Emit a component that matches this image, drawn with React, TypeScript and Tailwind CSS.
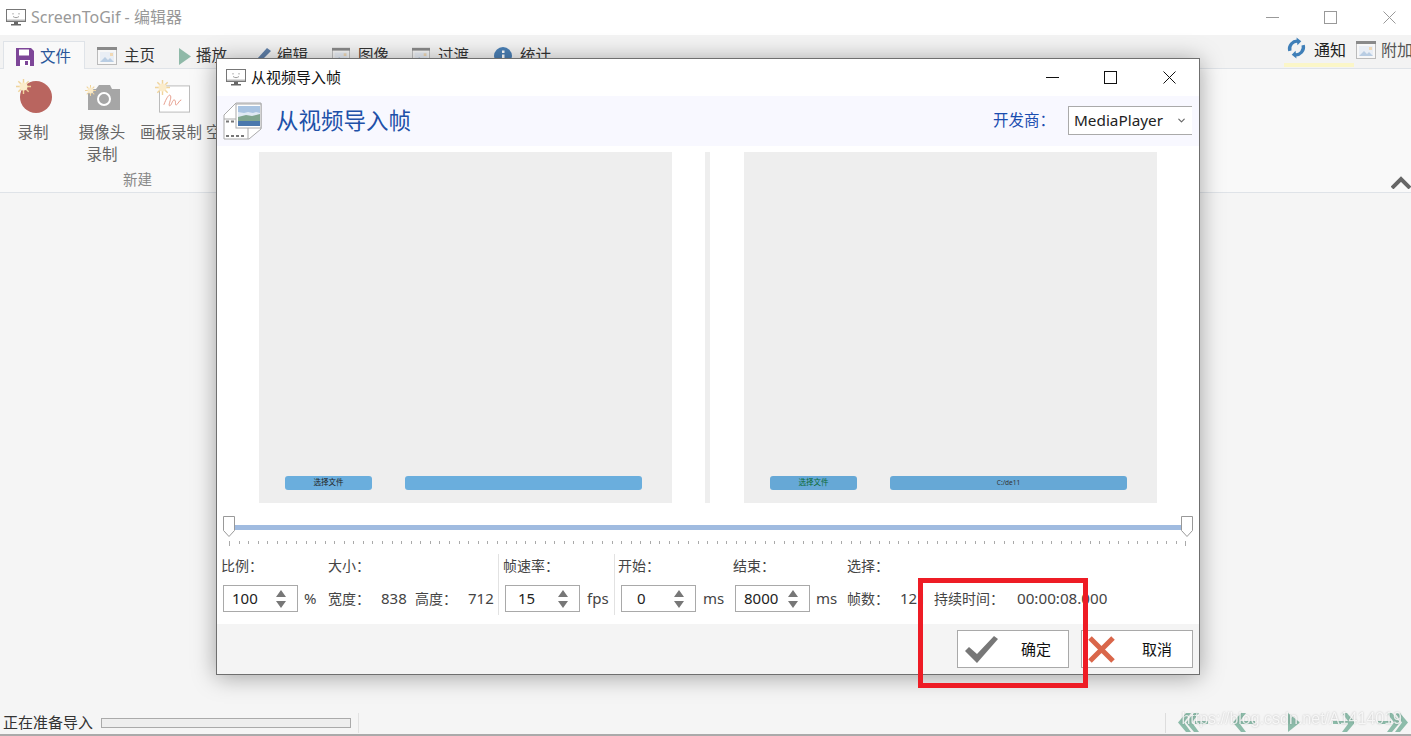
import React from 'react';
import { ChevronDown } from 'lucide-react';

const font = { fontFamily: '"Noto Sans", "Noto Sans CJK SC", sans-serif' };
const ticks = Array.from({ length: 101 }, (_, i) => i);

function Monitor({ className }: { className?: string }) {
  return (
    <svg viewBox="0 0 20 17" className={className}>
      <rect x="0.5" y="0.5" width="19" height="12" fill="#fff" stroke="#777" />
      <path d="M1 10.5h18V12H1z" fill="#bbb" />
      <path d="M7 4v1.5M13 4v1.5M7 7.5c2 1.5 4 1.5 6 0" fill="none" stroke="#888" strokeWidth="0.8" />
      <path d="M8 13h4v2H8zM5 15h10v1.5H5z" fill="#666" />
    </svg>
  );
}

function WinButtons({ color }: { color: string }) {
  return (
    <svg viewBox="0 0 130 14" className="w-[130px] h-[14px]" fill="none" stroke={color} strokeWidth="1">
      <path d="M0 6.5h13" />
      <rect x="58.5" y="0.5" width="12" height="12" />
      <path d="M117.500 0.500l12 12M129.500 0.500l-12 12" />
    </svg>
  );
}

function Picture({ className }: { className?: string }) {
  return (
    <svg viewBox="0 0 20 18" className={className}>
      <rect x="0.500" y="0.500" width="19" height="17" fill="#f7f7f7" stroke="#bbb" />
      <rect x="0" y="0" width="20" height="3" fill="#8a8a8a" />
      <rect x="3" y="5" width="14" height="10" fill="#e9eef5" />
      <path d="M3 15l5-5 3 3 2-2 4 4z" fill="#b9cde3" />
      <rect x="13" y="6" width="3" height="3" fill="#f1d9b5" />
    </svg>
  );
}

function Sun({ className }: { className?: string }) {
  return (
    <svg viewBox="0 0 16 16" className={className} stroke="#f0d49c" strokeWidth="1.500" fill="#fbeccb">
      <path d="M8 0v16M0 8h16M2.500 2.500l11 11M13.500 2.500l-11 11" />
      <circle cx="8" cy="8" r="3.500" stroke="#fbeccb" />
    </svg>
  );
}

function ArrowFirst() {
  return (
    <svg viewBox="0 0 30 19" className="w-[30px] h-[19px]" fill="#8dbcaa">
      <path d="M8 0L0 9.500 8 19h5L6 9.500 13 0zM16 0L8 9.500 16 19h5l-7-9.500L21 0zM17 8h13v3H17z" />
    </svg>
  );
}

function ArrowPrev() {
  return (
    <svg viewBox="0 0 22 19" className="w-[22px] h-[19px]" fill="#8dbcaa">
      <path d="M8 0L0 9.500 8 19h5L7 11h15V8H7l6-8z" />
    </svg>
  );
}

function ArrowPlay() {
  return (
    <svg viewBox="0 0 12 19" className="w-[12px] h-[19px]" fill="#8dbcaa">
      <path d="M0 0l12 9.500L0 19z" />
    </svg>
  );
}

function ArrowNext() {
  return (
    <svg viewBox="0 0 22 19" className="w-[22px] h-[19px]" fill="#8dbcaa">
      <path d="M14 0l8 9.500-8 9.500H9l6-8H0V8h15L9 0z" />
    </svg>
  );
}

function ArrowLast() {
  return (
    <svg viewBox="0 0 30 19" className="w-[30px] h-[19px]" fill="#8dbcaa">
      <path d="M22 0l8 9.500-8 9.500h-5l7-9.500L17 0zM14 0l8 9.500-8 9.500H9l7-9.500L9 0zM0 8h13v3H0z" />
    </svg>
  );
}

function Spinner({ value, align = 'pl-2' }: { value: string; align?: string }) {
  return (
    <div className={`w-[75px] h-[27px] border border-[#a9a9a9] bg-white flex items-center justify-between pr-[11px] text-[15px] text-[#222] ${align}`}>
      <span>{value}</span>
      <svg viewBox="0 0 10 20" className="w-[10px] h-[20px]" fill="#777">
        <path d="M5 1l5 7H0zM0 12h10l-5 7z" />
      </svg>
    </div>
  );
}

function VideoPanel({ right }: { right?: boolean }) {
  return (
    <div className="w-[413px] h-[351px] bg-[#eeeeee] flex flex-col justify-end">
      <div className="flex items-center pb-[13px] pl-[26px]">
        <div className={`w-[87px] h-[14px] rounded-[3px] flex items-center justify-center text-[7.500px] ${right ? 'bg-[#66a8d6] text-[#0b6a35]' : 'bg-[#6aaedd] text-[#222]'}`}>
          选择文件
        </div>
        <div className={`ml-[33px] w-[237px] h-[14px] rounded-[3px] flex items-center justify-center text-[6.500px] text-[#333] ${right ? 'bg-[#66a8d6]' : 'bg-[#6aaedd]'}`}>
          {right ? 'C:/de11' : ''}
        </div>
      </div>
    </div>
  );
}

function Thumb() {
  return (
    <svg viewBox="0 0 12 21" className="w-[12px] h-[21px]">
      <path d="M0.500 0.500h11v14l-5.500 6-5.500-6z" fill="#fff" stroke="#999" />
    </svg>
  );
}

export default function App() {
  return (
    <div className="relative w-[1411px] h-[736px] overflow-hidden flex flex-col bg-[#f5f5f5] text-[#333]" style={font}>
      {/* title bar */}
      <div className="h-[35px] bg-white flex items-center pl-[6px] pr-[15px] shrink-0">
        <Monitor className="w-[20px] h-[17px]" />
        <span className="ml-[5px] -mt-[2px] text-[16px] text-[#999]">ScreenToGif - 编辑器</span>
        <div className="ml-auto">
          <WinButtons color="#999" />
        </div>
      </div>

      {/* tabs */}
      <div className="h-[34px] bg-[#f3f3f3] border-b border-[#dfe3e8] flex items-end pl-[3px] shrink-0 text-[15.500px] text-[#333]">
        <div className="relative -mb-px w-[82px] h-[28px] bg-[#f9f9f9] border border-b-0 border-[#dfe3e8] flex items-center pl-[12px] pt-[3px] gap-[6px] text-[#2b579a]">
          <svg viewBox="0 0 18 18" className="w-[18px] h-[18px]">
            <path d="M0 0h15l3 3v15H0z" fill="#7d4698" />
            <path d="M3 1.500h10v6H3z" fill="#fff" />
            <path d="M4 12h10v6H4z" fill="#fff" />
            <path d="M9 13h3v4H9z" fill="#7d4698" />
          </svg>
          <span>文件</span>
        </div>
        <div className="h-[27px] pt-[3px] flex items-center">
          <Picture className="ml-[12px] w-[20px] h-[18px]" />
          <span className="ml-[7px]">主页</span>
          <svg viewBox="0 0 12 17" className="ml-[24px] w-[12px] h-[17px]" fill="#8fb9a8">
            <path d="M0 0l12 8.500L0 17z" />
          </svg>
          <span className="ml-[5px]">播放</span>
          <svg viewBox="0 0 16 16" className="ml-[28px] w-[16px] h-[16px]" fill="#5f7fa8">
            <path d="M12 0l4 3L5 14l-5 2 2-5z" />
          </svg>
          <span className="ml-[6px]">编辑</span>
          <Picture className="ml-[24px] w-[18px] h-[18px]" />
          <span className="ml-[8px]">图像</span>
          <Picture className="ml-[23px] w-[18px] h-[18px]" />
          <span className="ml-[8px]">过渡</span>
          <svg viewBox="0 0 18 18" className="ml-[25px] w-[18px] h-[18px]">
            <circle cx="9" cy="9" r="9" fill="#4a7fb5" />
            <path d="M8 3.500h2.500V6H8zM8 7.500h2.500V15H8z" fill="#fff" />
          </svg>
          <span className="ml-[8px]">统计</span>
        </div>
        <div className="ml-auto h-[33px] flex items-center">
          <div className="relative -mb-[2px] h-[33px] w-[70px] flex items-center pl-[2px] text-[16px]">
            <svg viewBox="0 0 22 22" className="-mt-[9px] w-[21px] h-[22px]" fill="none" stroke="#3f7fb8" strokeWidth="3.500">
              <path d="M4 14a8 8 0 0 1 9-10M18 8a8 8 0 0 1-9 10" />
              <path d="M11 0l5 4-4 4zM11 22l-5-4 4-4z" fill="#3f7fb8" stroke="none" />
            </svg>
            <span className="ml-[7px] -mt-[5px] text-[#222]">通知</span>
            <div className="absolute left-0 right-0 bottom-[2px] h-[4px] bg-[#fbf6c8]" />
          </div>
          <Picture className="ml-[2px] -mt-[3px] w-[20px] h-[18px]" />
          <span className="ml-[5px] -mt-[3px] w-[30px] whitespace-nowrap text-[16px] text-[#555]">附加</span>
        </div>
      </div>

      {/* ribbon */}
      <div className="relative h-[124px] bg-[#f9f9f9] border-b border-[#dfe3e8] shrink-0 text-[15.500px] text-[#666]">
        <div className="flex pl-[3px] pt-[9px]">
          <div className="w-[60px] flex flex-col items-center">
            <div className="relative h-[37px] w-[40px]">
              <div className="absolute left-[7px] top-[3px] w-[32px] h-[32px] rounded-full bg-[#b9655f]" />
              <Sun className="absolute left-[3px] top-[1px] w-[15px] h-[15px]" />
            </div>
            <span className="mt-[6px] leading-[22px]">录制</span>
          </div>
          <div className="ml-[5px] w-[68px] flex flex-col items-center">
            <div className="relative h-[37px] w-[40px]">
              <svg viewBox="0 0 32 25" className="absolute left-[6px] top-[7px] w-[32px] h-[25px]">
                <path d="M0 4h8l3-4h11l2 4h8v21H0z" fill="#a6a6a6" />
                <circle cx="16" cy="14" r="6" fill="none" stroke="#fff" strokeWidth="2" />
              </svg>
              <Sun className="absolute left-[3px] top-[7px] w-[11px] h-[11px]" />
            </div>
            <span className="mt-[6px] leading-[22px] text-center">摄像头<br />录制</span>
          </div>
          <div className="ml-[1px] w-[68px] flex flex-col items-center">
            <div className="relative h-[37px] w-[40px]">
              <svg viewBox="0 0 32 28" className="absolute left-[8px] top-[7px] w-[31px] h-[28px]">
                <rect x="0.500" y="0.500" width="31" height="27" fill="#fff" stroke="#bbb" />
                <path d="M5 20c3-8 6-12 7-9s-3 10-1 10 3-7 5-6 0 6 2 5 3-5 5-5" fill="none" stroke="#e59a88" />
              </svg>
              <Sun className="absolute left-[4px] top-[2px] w-[15px] h-[15px]" />
            </div>
            <span className="mt-[6px] leading-[22px] whitespace-nowrap">画板录制</span>
          </div>
          <span className="ml-[1px] mt-[43px] leading-[22px]">空</span>
        </div>
        <div className="absolute left-[123px] bottom-[1px] text-[14.500px] text-[#888]">新建</div>
        <svg viewBox="0 0 20 13" className="absolute right-0 bottom-[3px] w-[20px] h-[13px]" fill="none" stroke="#666" strokeWidth="4">
          <path d="M1 12l9-9 9 9" />
        </svg>
      </div>

      <div className="flex-1" />

      {/* status bar */}
      <div className="h-[25px] border-b-2 border-[#aaaaaa] flex items-center pl-[3px] pr-[3px] shrink-0 relative">
        <span className="text-[15px] text-[#333] w-[98px] whitespace-nowrap">正在准备导入</span>
        <div className="w-[250px] h-[10px] border border-[#aaaaaa] bg-[#eeeeee]" />
        <div className="ml-[7px] w-px h-[20px] bg-[#e2e2e2]" />
        <div className="ml-auto w-px h-[20px] bg-[#dddddd]" />
        <div className="ml-[12px] flex items-center">
          <ArrowFirst />
          <div className="ml-[25px]"><ArrowPrev /></div>
          <div className="ml-[33px]"><ArrowPlay /></div>
          <div className="ml-[33px]"><ArrowNext /></div>
          <div className="ml-[23px]"><ArrowLast /></div>
        </div>
        <div className="absolute right-[9px] top-[-4px] text-[16px] text-white/80 blur-[0.5px] whitespace-nowrap [text-shadow:0_0_2px_rgba(0,0,0,0.25)]" style={{ fontFamily: '"Liberation Sans", sans-serif' }}>
          https://blog.csdn.net/A1414019
        </div>
      </div>

      {/* dialog */}
      <div className="absolute left-[216px] top-[58px] w-[984px] h-[617px] bg-white border border-[#6f6f6f] flex flex-col shadow-[0_2px_22px_rgba(0,0,0,0.35)]">
        <div className="h-[37px] flex items-center pl-[9px] pr-[23px] shrink-0">
          <Monitor className="w-[20px] h-[17px]" />
          <span className="ml-[5px] text-[15px] text-[#111]">从视频导入帧</span>
          <div className="ml-auto">
            <WinButtons color="#111" />
          </div>
        </div>

        <div className="h-[50px] bg-[#f8f8ff] flex items-center pl-[6px] pr-[7px] shrink-0">
          <svg viewBox="0 0 39 38" className="w-[39px] h-[38px]">
            <path d="M13 1h25v26L26 37H1V13z" fill="#fff" stroke="#aaa" />
            <path d="M1 13l12-12M1 17h24v20" fill="none" stroke="#aaa" />
            <path d="M3 18.500h3v2H3zM8 18.500h3v2H8zM13 18.500h3v2h-3zM3 33h3v2H3zM8 33h3v2H8zM13 33h3v2h-3zM18 33h3v2h-3z" fill="#777" />
            <rect x="13" y="2" width="25" height="24" fill="#fff" stroke="#aaa" />
            <rect x="15" y="4" width="22" height="20" fill="#dfe9f4" />
            <path d="M15 4h22v7l-4-1-3 1-5-1-4 1-6-1z" fill="#a9c4e2" />
            <path d="M15 15l8-2 6 1 8-2v8H15z" fill="#7fa58f" />
            <rect x="15" y="19" width="22" height="5" fill="#4a78ad" />
          </svg>
          <span className="ml-[14px] text-[22.500px] text-[#2050a8]">从视频导入帧</span>
          <span className="ml-auto text-[15.500px] text-[#1a4db0]">开发商：</span>
          <div className="ml-[13px] -mt-[2px] w-[124px] h-[29px] border border-r-0 border-[#aaaaaa] bg-white flex items-center pl-[5px] pr-[5px] justify-between text-[15.300px] text-[#222]">
            <span>MediaPlayer</span>
            <ChevronDown className="w-[11px] h-[11px] text-[#666]" strokeWidth={2.500} />
          </div>
        </div>

        {/* video previews */}
        <div className="flex pl-[42px] pt-[6px] shrink-0">
          <VideoPanel />
          <div className="ml-[33px] w-[5px] h-[351px] bg-[#eeeeee]" />
          <div className="ml-[34px]">
            <VideoPanel right />
          </div>
        </div>

        {/* range slider */}
        <div className="relative h-[38px] mt-[13px] mx-[6px] shrink-0">
          <div className="absolute left-[6px] right-[6px] top-[9px] h-[5px] bg-[#a0bbe0]" />
          <div className="absolute left-0 top-0"><Thumb /></div>
          <div className="absolute right-0 top-0"><Thumb /></div>
          <div className="absolute left-[6px] right-[6px] top-[25px] flex justify-between items-start">
            {ticks.map((t) => (
              <div key={t} className={`w-px bg-[#aaa] ${t === 0 || t === 100 ? 'h-[5px]' : 'h-[3px]'}`} />
            ))}
          </div>
        </div>

        {/* numeric controls */}
        <div className="flex pl-[4px] h-[70px] shrink-0 text-[14px] text-[#444] whitespace-nowrap">
          <div className="w-[107px] h-[61px] flex flex-col">
            <div className="h-[22px] flex items-center">比例：</div>
            <div className="mt-[9px] flex items-center pl-[2px] gap-[6px]">
              <Spinner value="100" />
              <span className="text-[15px]">%</span>
            </div>
          </div>
          <div className="w-[170px] h-[61px] flex flex-col">
            <div className="h-[22px] flex items-center">大小：</div>
            <div className="mt-[9px] h-[27px] flex items-center">
              <span className="w-[53px]">宽度：</span>
              <span className="w-[34px] text-[15px]">838</span>
              <span className="w-[53px]">高度：</span>
              <span className="text-[15px]">712</span>
            </div>
          </div>
          <div className="w-[116px] h-[61px] border-l border-[#e2e2e2] pl-[4px] flex flex-col">
            <div className="h-[22px] flex items-center">帧速率：</div>
            <div className="mt-[9px] flex items-center pl-[2px] gap-[7px]">
              <Spinner value="15" align="pl-[12px]" />
              <span className="text-[15px]">fps</span>
            </div>
          </div>
          <div className="w-[119px] h-[61px] border-l border-[#e2e2e2] pl-[3px] flex flex-col">
            <div className="h-[22px] flex items-center">开始：</div>
            <div className="mt-[9px] flex items-center pl-[3px] gap-[7px]">
              <Spinner value="0" align="pl-[15px]" />
              <span className="text-[15px]">ms</span>
            </div>
          </div>
          <div className="w-[114px] h-[61px] flex flex-col">
            <div className="h-[22px] flex items-center">结束：</div>
            <div className="mt-[9px] flex items-center pl-[2px] gap-[6px]">
              <Spinner value="8000" />
              <span className="text-[15px]">ms</span>
            </div>
          </div>
          <div className="h-[61px] flex flex-col">
            <div className="h-[22px] flex items-center">选择：</div>
            <div className="mt-[9px] h-[27px] flex items-center">
              <span className="w-[53px]">帧数：</span>
              <span className="w-[34px] text-[15px]">121</span>
              <span className="w-[83px]">持续时间：</span>
              <span className="text-[15.200px]">00:00:08.000</span>
            </div>
          </div>
        </div>

        {/* footer */}
        <div className="flex-1 bg-[#f4f4f4] flex justify-end pt-[6px] pr-[6px] gap-[12px]">
          <div className="w-[112px] h-[38px] bg-white border border-[#a9a9a9] flex items-center pl-[7px] text-[15px] text-[#111]">
            <svg viewBox="0 0 33 27" className="w-[33px] h-[27px]" fill="#777">
              <path d="M0 15l4-4 8 7L29 0l4 3-21 24z" />
            </svg>
            <span className="ml-[23px]">确定</span>
          </div>
          <div className="w-[112px] h-[38px] bg-white border border-[#a9a9a9] flex items-center pl-[6px] text-[15px] text-[#111]">
            <svg viewBox="0 0 27 27" className="w-[27px] h-[27px]" fill="none" stroke="#d9664a" strokeWidth="5">
              <path d="M2 2l23 23M25 2L2 25" />
            </svg>
            <span className="ml-[27px]">取消</span>
          </div>
        </div>
      </div>

      {/* red annotation */}
      <div className="absolute left-[918px] top-[578px] w-[170px] h-[110px] border-[5px] border-[#ee1c25]" />
    </div>
  );
}
